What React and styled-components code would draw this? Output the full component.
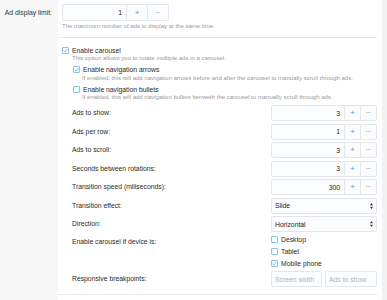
import React from 'react'
import styled, { createGlobalStyle } from 'styled-components'

const GlobalStyle = createGlobalStyle`
  html, body {
    margin: 0;
    padding: 0;
  }
  body {
    font-family: "Liberation Sans", Arial, sans-serif;
    color: #333;
    background: #f2f2f2;
  }
`

const Page = styled.div`
  display: flex;
  width: 387px;
  height: 300px;
  overflow: hidden;
  background: #f2f2f2;
`

const Form = styled.div`
  width: 382px;
  display: flex;
  flex-direction: column;
  background: #f7f7f7;
`

const FormRow = styled.div`
  display: flex;
  flex: ${p => (p.$fill ? 1 : 'none')};
`

const LabelCell = styled.div`
  width: 58px;
  flex: none;
  box-sizing: border-box;
  padding: ${p => p.$top || 0}px 6px 0 0;
  text-align: right;
  font-size: 6.8px;
  line-height: 8px;
  color: #333;
`

const FieldCell = styled.div`
  flex: 1;
  background: #fff;
  padding-right: 5px;
`

const Section = styled.div`
  border-bottom: 1px solid #e8e8e8;
  padding: ${p => p.$pad};
`

const Hint = styled.div`
  font-size: 6px;
  line-height: 7px;
  color: #9a9a9a;
  margin-top: ${p => p.$mt || 1}px;
  padding-left: ${p => p.$indent || 0}px;
  white-space: nowrap;
`

const NumberBox = styled.div`
  display: flex;
  width: ${p => p.$w}px;
  height: ${p => p.$h}px;
  box-sizing: border-box;
  border: 1px solid #e3e7eb;
  border-radius: 2px;
  background: #fbfcfd;
`

const NumberValue = styled.div`
  flex: 1;
  display: flex;
  align-items: center;
  justify-content: flex-end;
  padding-right: 4px;
  font-size: 6.8px;
  color: #222;
`

const StepButton = styled.div`
  width: ${p => p.$w}px;
  flex: none;
  display: flex;
  align-items: center;
  justify-content: center;
  border-left: 1px solid #e3e7eb;
  font-size: 8px;
  line-height: 1;
  color: ${p => (p.$plus ? '#3c9de0' : '#a6bccc')};
`

const CheckRow = styled.label`
  display: flex;
  align-items: center;
  gap: 3px;
  height: 8px;
  margin-top: ${p => p.$mt || 0}px;
  padding-left: ${p => p.$indent || 0}px;
  font-size: 6.8px;
  color: #2b2b2b;
`

const Box = styled.span`
  width: 7px;
  height: 7px;
  flex: none;
  box-sizing: border-box;
  border: 1px solid #8cc2e4;
  border-radius: 1px;
  background: #fff;
  display: flex;
  align-items: center;
  justify-content: center;
`

const Settings = styled.div`
  display: grid;
  grid-template-columns: 1fr 106px;
  row-gap: 2.5px;
  padding-left: 10px;
  margin-top: 4px;
`

const SettingLabel = styled.div`
  font-size: 6.8px;
  line-height: 8px;
  color: #2b2b2b;
  align-self: ${p => (p.$top ? 'start' : 'center')};
  padding-top: ${p => p.$top || 0}px;
`

const Select = styled.div`
  height: 16px;
  box-sizing: border-box;
  border: 1px solid #e3e7eb;
  border-radius: 2px;
  background: #fcfdfe;
  display: flex;
  align-items: center;
  justify-content: space-between;
  padding: 0 3px;
  font-size: 6.8px;
  color: #222;
`

const DeviceList = styled.div`
  display: flex;
  flex-direction: column;
  gap: 4px;
  padding: 0.5px 0 1.5px;
`

const Breakpoints = styled.div`
  display: flex;
  gap: 3px;
`

const TextBox = styled.div`
  flex: ${p => p.$grow};
  height: 16px;
  box-sizing: border-box;
  border: 1px solid #e3e7eb;
  border-radius: 2px;
  background: #fcfdfe;
  display: flex;
  align-items: center;
  padding-left: 3px;
  font-size: 6.8px;
  color: #b3b3b3;
`

const Check = ({ checked }) => (
  <Box>
    {checked && (
      <svg width="5" height="5" viewBox="0 0 5 5">
        <path d="M0.8 2.6 L2 3.8 L4.3 1.2" fill="none" stroke="#5aaee0" strokeWidth="0.9" />
      </svg>
    )}
  </Box>
)

const UpDown = () => (
  <svg width="3" height="6" viewBox="0 0 3 6">
    <path d="M1.5 0 L3 2.2 L0 2.2 Z M1.5 6 L3 3.8 L0 3.8 Z" fill="#333" />
  </svg>
)

const Stepper = ({ value, w = 106, h = 16, btn = 15 }) => (
  <NumberBox $w={w} $h={h}>
    <NumberValue>{value}</NumberValue>
    <StepButton $w={btn} $plus>+</StepButton>
    <StepButton $w={btn}>−</StepButton>
  </NumberBox>
)

const numberRows = [
  ['Ads to show:', 3],
  ['Ads per row:', 1],
  ['Ads to scroll:', 3],
  ['Seconds between rotations:', 3],
  ['Transition speed (miliseconds):', 300],
]

const devices = [
  ['Desktop', false],
  ['Tablet', false],
  ['Mobile phone', true],
]

export default function App() {
  return (
    <Page>
      <GlobalStyle />
      <Form>
        <FormRow>
          <LabelCell $top={9}>Ad display limit:</LabelCell>
          <FieldCell>
            <Section $pad="4px 0 7px 4px">
              <Stepper value={1} w={107} h={17} btn={20} />
              <Hint $mt={2}>The maximum number of ads to display at the same time.</Hint>
            </Section>
          </FieldCell>
        </FormRow>
        <FormRow>
          <LabelCell />
          <FieldCell>
            <Section $pad="8px 0 7px 4px">
              <CheckRow>
                <Check checked />
                Enable carousel
              </CheckRow>
              <Hint $indent={10}>This option allows you to rotate multiple ads in a carousel.</Hint>
              <CheckRow $indent={11} $mt={3.5}>
                <Check checked />
                Enable navigation arrows
              </CheckRow>
              <Hint $indent={20}>
                If enabled, this will add navigation arrows before and after the carousel to manually scroll through ads.
              </Hint>
              <CheckRow $indent={11} $mt={3.5}>
                <Check />
                Enable navigation bullets
              </CheckRow>
              <Hint $indent={20}>
                If enabled, this will add navigation bullets benweth the carousel to manually scroll through ads.
              </Hint>
              <Settings>
                {numberRows.map(([label, value]) => (
                  <React.Fragment key={label}>
                    <SettingLabel>{label}</SettingLabel>
                    <Stepper value={value} />
                  </React.Fragment>
                ))}
                <SettingLabel>Transition effect:</SettingLabel>
                <Select>
                  Slide
                  <UpDown />
                </Select>
                <SettingLabel>Direction:</SettingLabel>
                <Select>
                  Horizontal
                  <UpDown />
                </Select>
                <SettingLabel $top={3.5}>Enable carousel if device is:</SettingLabel>
                <DeviceList>
                  {devices.map(([name, on]) => (
                    <CheckRow key={name}>
                      <Check checked={on} />
                      {name}
                    </CheckRow>
                  ))}
                </DeviceList>
                <SettingLabel>Responsive breakpoints:</SettingLabel>
                <Breakpoints>
                  <TextBox $grow={51}>Screen width</TextBox>
                  <TextBox $grow={52}>Ads to show</TextBox>
                </Breakpoints>
              </Settings>
            </Section>
          </FieldCell>
        </FormRow>
        <FormRow $fill>
          <LabelCell />
          <FieldCell />
        </FormRow>
      </Form>
    </Page>
  )
}
